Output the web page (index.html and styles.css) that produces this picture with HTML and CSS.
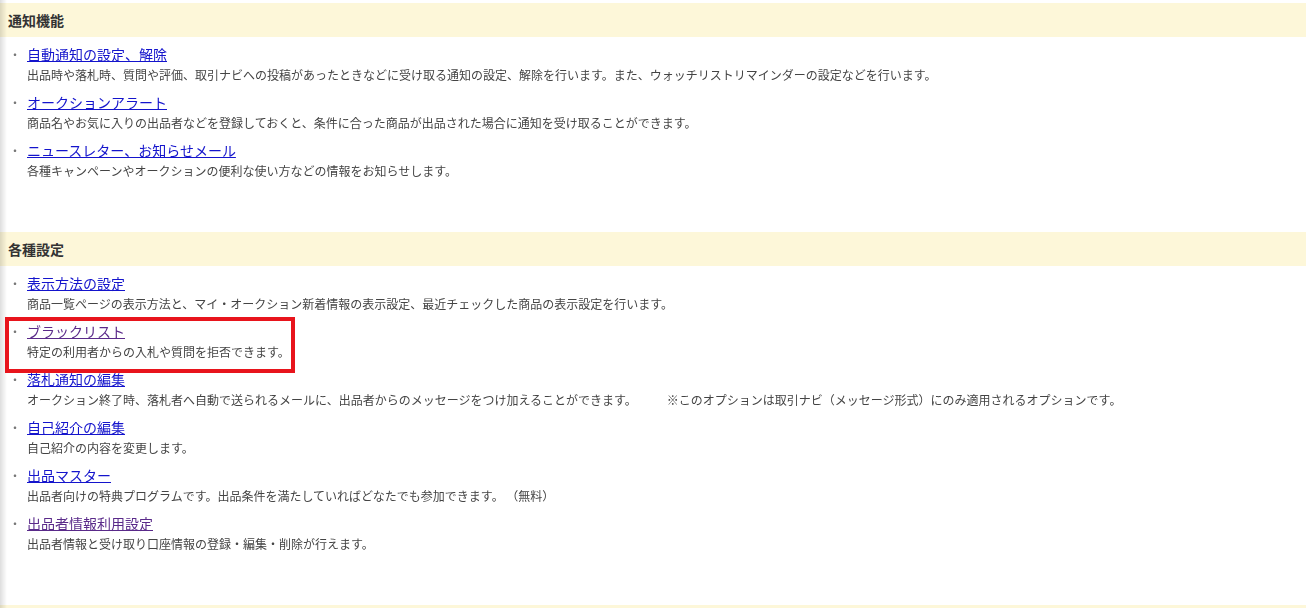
FILE: index.html
```html
<!DOCTYPE html>
<html lang="ja">
<head>
    <meta charset="UTF-8">
    <meta name="viewport" content="width=device-width, initial-scale=1.0">
    <title>オプション設定</title>
    <link rel="stylesheet" href="styles.css">
</head>
<body>

    <!-- 通知機能 -->
    <div class="section">
        <h2 class="section-title">通知機能</h2>
        <ul class="menu">
            <li>
                <span class="dot">・</span>
                <div class="entry">
                    <a href="#" class="entry-link">自動通知の設定、解除</a>
                    <p class="entry-desc">出品時や落札時、質問や評価、取引ナビへの投稿があったときなどに受け取る通知の設定、解除を行います。また、ウォッチリストリマインダーの設定などを行います。</p>
                </div>
            </li>
            <li>
                <span class="dot">・</span>
                <div class="entry">
                    <a href="#" class="entry-link">オークションアラート</a>
                    <p class="entry-desc">商品名やお気に入りの出品者などを登録しておくと、条件に合った商品が出品された場合に通知を受け取ることができます。</p>
                </div>
            </li>
            <li>
                <span class="dot">・</span>
                <div class="entry">
                    <a href="#" class="entry-link">ニュースレター、お知らせメール</a>
                    <p class="entry-desc">各種キャンペーンやオークションの便利な使い方などの情報をお知らせします。</p>
                </div>
            </li>
        </ul>
    </div>

    <!-- 各種設定 -->
    <div class="section">
        <h2 class="section-title">各種設定</h2>
        <ul class="menu">
            <li>
                <span class="dot">・</span>
                <div class="entry">
                    <a href="#" class="entry-link">表示方法の設定</a>
                    <p class="entry-desc">商品一覧ページの表示方法と、マイ・オークション新着情報の表示設定、最近チェックした商品の表示設定を行います。</p>
                </div>
            </li>
            <li class="marked">
                <span class="dot">・</span>
                <div class="entry">
                    <a href="#" class="entry-link visited">ブラックリスト</a>
                    <p class="entry-desc">特定の利用者からの入札や質問を拒否できます。</p>
                </div>
            </li>
            <li>
                <span class="dot">・</span>
                <div class="entry">
                    <a href="#" class="entry-link">落札通知の編集</a>
                    <p class="entry-desc">オークション終了時、落札者へ自動で送られるメールに、出品者からのメッセージをつけ加えることができます。　　　※このオプションは取引ナビ（メッセージ形式）にのみ適用されるオプションです。</p>
                </div>
            </li>
            <li>
                <span class="dot">・</span>
                <div class="entry">
                    <a href="#" class="entry-link">自己紹介の編集</a>
                    <p class="entry-desc">自己紹介の内容を変更します。</p>
                </div>
            </li>
            <li>
                <span class="dot">・</span>
                <div class="entry">
                    <a href="#" class="entry-link">出品マスター</a>
                    <p class="entry-desc">出品者向けの特典プログラムです。出品条件を満たしていればどなたでも参加できます。 （無料）</p>
                </div>
            </li>
            <li>
                <span class="dot">・</span>
                <div class="entry">
                    <a href="#" class="entry-link visited">出品者情報利用設定</a>
                    <p class="entry-desc">出品者情報と受け取り口座情報の登録・編集・削除が行えます。</p>
                </div>
            </li>
        </ul>
    </div>

    <!-- next section band (cut off at the bottom) -->
    <div class="section-title section-next"></div>

</body>
</html>
```

FILE: styles.css
```css
/* Base */
html, body {
    margin: 0;
    padding: 0;
    background-color: #fff;
    color: #444;
    font-family: "Noto Sans CJK JP", "Noto Sans", sans-serif;
    -webkit-font-smoothing: antialiased;
}

body {
    padding-top: 3px;
}

/* faint grey shadow along the left edge */
body::before {
    content: "";
    position: fixed;
    top: 0;
    bottom: 0;
    left: 0;
    width: 7px;
    background: linear-gradient(to right, rgba(0, 0, 0, 0.13), rgba(0, 0, 0, 0));
    pointer-events: none;
}

/* Section */
.section {
    padding-bottom: 44px;
}

.section-title {
    margin: 0;
    height: 34px;
    padding-left: 8px;
    background-color: #fdf7d9;
    color: #333;
    font-size: 14px;
    font-weight: bold;
    line-height: 34px;
}

/* Item list */
.menu {
    list-style: none;
    margin: 0;
    padding: 7px 0 0 0;
}

.menu li {
    display: flex;
    padding-left: 9px;
    margin-bottom: 8px;
    position: relative;
    font-size: 14px;
    line-height: 20px;
}

.dot {
    width: 18px;
    flex: 0 0 18px;
    height: 20px;
    font-size: 12px;
    line-height: 21px;
    color: #777;
}

.entry {
    min-width: 0;
    font-size: 14px;
    line-height: 20px;
}

.entry-link {
    display: block;
    width: max-content;
    font-size: 14px;
    line-height: 20px;
    color: #1414cc;
    text-decoration: underline;
}

.entry-link.visited {
    color: #5a2a8a;
}

.entry-desc {
    margin: 2px 0 0 0;
    font-size: 12px;
    line-height: 18px;
    color: #444;
    white-space: pre-wrap;
}

/* red annotation box */
.marked::after {
    content: "";
    position: absolute;
    top: -4px;
    left: 5px;
    width: 290px;
    height: 56px;
    box-sizing: border-box;
    border: 4px solid #e8141c;
    pointer-events: none;
}
```
